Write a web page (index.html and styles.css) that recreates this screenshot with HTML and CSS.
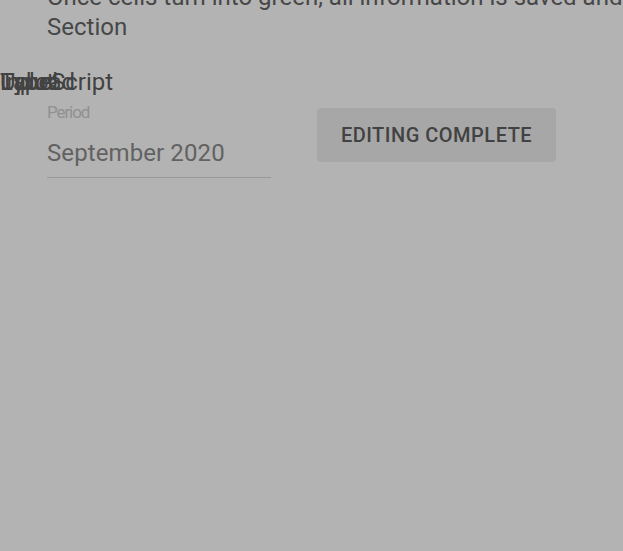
FILE: index.html
```html
<!DOCTYPE html>
<html>
<head>
<meta charset="utf-8">
<link rel="stylesheet" href="styles.css">
</head>
<body>
<main class="page">
  <p class="intro">Once cells turn into green, all information is saved and<br>Section</p>
  <div class="stack">
    <span class="word">TypeScript</span>
    <span class="word">Upload</span>
    <span class="word">Input</span>
    <span class="word">Label</span>
  </div>
  <div class="form-row">
    <div class="field">
      <label class="field-label">Period</label>
      <div class="field-input">September 2020</div>
    </div>
    <button class="btn">EDITING COMPLETE</button>
  </div>
</main>
</body>
</html>
```
FILE: styles.css
```css
html, body {
  margin: 0;
  padding: 0;
  height: 100%;
  overflow: hidden;
}
body {
  background: #b3b3b3;
  font-family: Roboto, "Liberation Sans", sans-serif;
  color: #424242;
}
.page {
  display: flex;
  flex-direction: column;
}
.intro {
  margin: -18px 0 0 0;
  padding-left: 47px;
  font-size: 24px;
  line-height: 30px;
  white-space: nowrap;
  color: #474747;
}
.stack {
  display: grid;
  margin-top: 25px;
  justify-items: start;
}
.word {
  grid-area: 1 / 1;
  font-size: 24px;
  line-height: 30px;
  color: #424242;
}
.form-row {
  display: flex;
  align-items: flex-start;
  padding-left: 47px;
  gap: 46px;
  margin-top: 6px;
}
.field {
  width: 224px;
  display: flex;
  flex-direction: column;
}
.field-label {
  font-size: 17px;
  line-height: 18px;
  letter-spacing: -1.1px;
  color: #909090;
}
.field-input {
  margin-top: 17px;
  font-size: 24px;
  line-height: 30px;
  letter-spacing: 0.1px;
  padding-bottom: 9px;
  border-bottom: 1px solid #989898;
  color: #626262;
}
.btn {
  margin-top: 5px;
  width: 239px;
  height: 54px;
  border: none;
  border-radius: 4px;
  background: #a7a7a7;
  color: #424242;
  font-family: Roboto, "Liberation Sans", sans-serif;
  font-weight: 500;
  font-size: 20px;
  letter-spacing: 0.5px;
  padding: 0;
}
```
